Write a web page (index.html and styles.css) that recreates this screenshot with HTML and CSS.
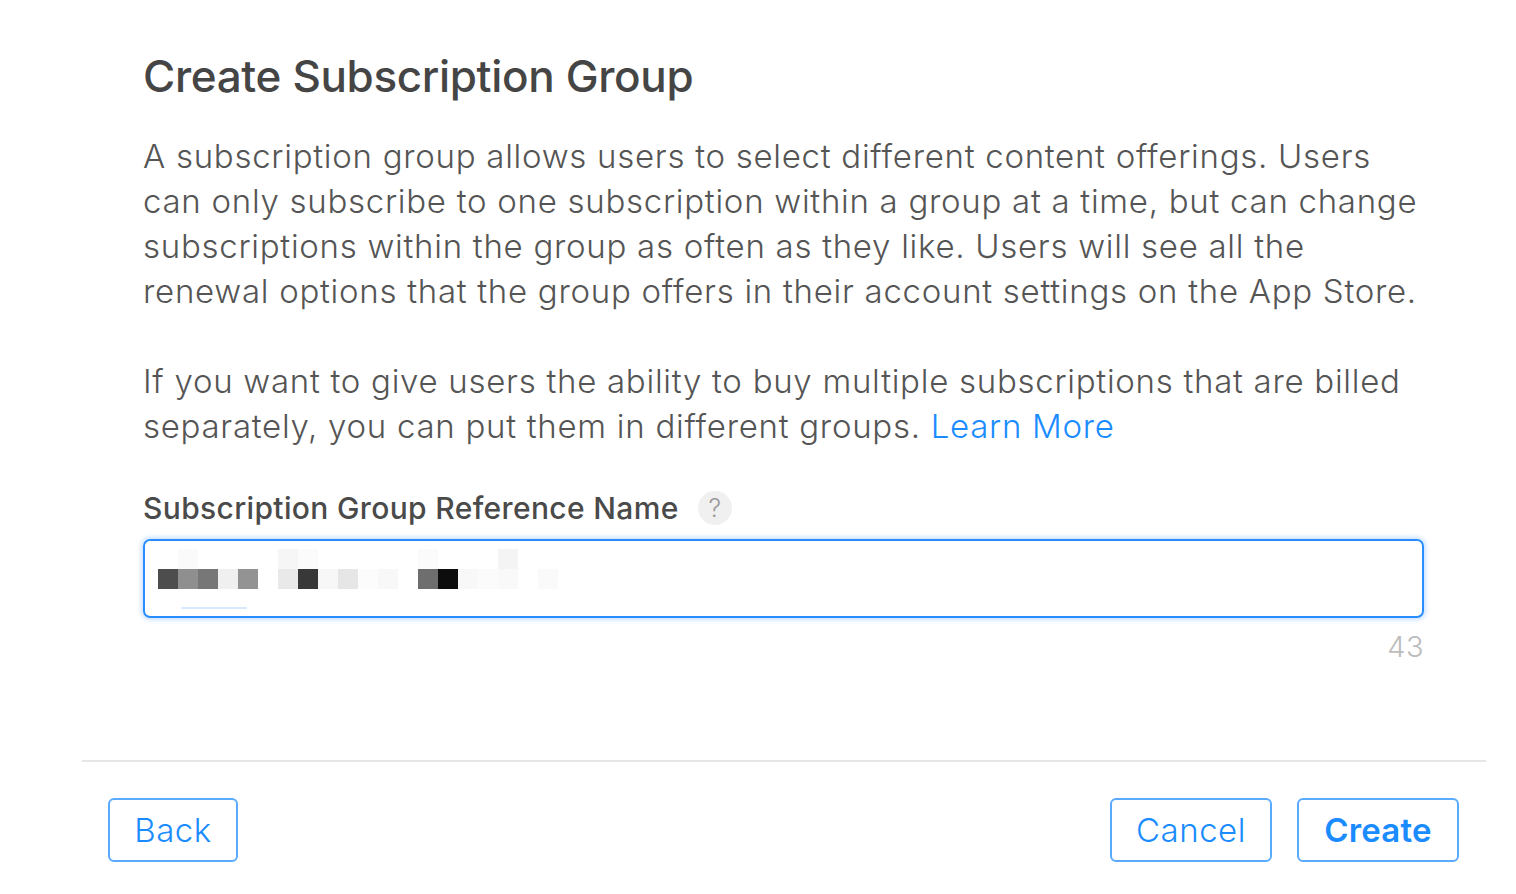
FILE: index.html
```html
<!DOCTYPE html>
<html>
<head>
<meta charset="utf-8">
<link rel="stylesheet" href="styles.css">
</head>
<body>
<div class="dialog">
  <div class="content">
    <h1 class="title">Create Subscription Group</h1>
    <p class="desc">A subscription group allows users to select different content offerings. Users can only subscribe to one subscription within a group at a time, but can change subscriptions within the group as often as they like. Users will see all the renewal options that the group offers in their account settings on the App Store.</p>
    <p class="desc">If you want to give users the ability to buy multiple subscriptions that are billed separately, you can put them in different groups. <a class="link" href="#">Learn More</a></p>
    <div class="label-row">
      <span class="label">Subscription Group Reference Name</span>
      <span class="help">?</span>
    </div>
    <div class="input">
      <div class="pixels">
        <div class="prow">
          <span class="px"></span><span class="px g-fa"></span><span class="px"></span><span class="px"></span><span class="px"></span><span class="px"></span><span class="px g-f6"></span><span class="px g-fb"></span><span class="px"></span><span class="px"></span><span class="px"></span><span class="px"></span><span class="px"></span><span class="px g-fb"></span><span class="px"></span><span class="px"></span><span class="px"></span><span class="px g-f4"></span><span class="px"></span><span class="px"></span>
        </div>
        <div class="prow">
          <span class="px g-4d"></span><span class="px g-8f"></span><span class="px g-77"></span><span class="px g-f0"></span><span class="px g-93"></span><span class="px"></span><span class="px g-e9"></span><span class="px g-38"></span><span class="px g-f7"></span><span class="px g-e6"></span><span class="px g-fc"></span><span class="px g-f8"></span><span class="px"></span><span class="px g-6e"></span><span class="px g-0d"></span><span class="px g-f8"></span><span class="px g-fb"></span><span class="px g-f9"></span><span class="px"></span><span class="px g-fa"></span>
        </div>
      </div>
      <span class="underline"></span>
    </div>
    <div class="counter">43</div>
  </div>
  <div class="divider"></div>
  <div class="footer">
    <button class="btn">Back</button>
    <div class="actions">
      <button class="btn btn-cancel">Cancel</button>
      <button class="btn btn-primary">Create</button>
    </div>
  </div>
</div>
</body>
</html>
```

FILE: styles.css
```css
* { box-sizing: border-box; }
html, body { margin: 0; padding: 0; background: #fff; }
body {
  font-family: Inter, "Noto Sans", "Liberation Sans", sans-serif;
  width: 1516px;
  height: 894px;
  overflow: hidden;
}
.dialog { display: flex; flex-direction: column; }
.content { padding: 48px 92px 0 143px; }
.title {
  margin: 0;
  font-size: 44px;
  font-weight: 500;
  color: #454545;
  line-height: 56px;
  letter-spacing: -0.35px;
}
.desc {
  margin: 0;
  font-size: 33px;
  font-weight: 300;
  line-height: 45px;
  letter-spacing: 0.72px;
  color: #555;
}
.title + .desc { margin-top: 30px; }
.desc + .desc { margin-top: 45px; }
.link { color: #1a8cff; text-decoration: none; }
.label-row {
  display: flex;
  align-items: center;
  gap: 19px;
  margin-top: 42px;
  height: 34px;
}
.label {
  font-size: 30px;
  font-weight: 500;
  letter-spacing: 0.35px;
  color: #4a4a4a;
}
.help {
  width: 34px;
  height: 34px;
  border-radius: 50%;
  background: #f0f0f0;
  color: #9a9a9a;
  font-size: 25px;
  font-weight: 300;
  display: flex;
  align-items: center;
  justify-content: center;
}
.input {
  position: relative;
  margin-top: 14px;
  height: 79px;
  border: 2px solid #2a8dff;
  border-radius: 7px;
  box-shadow: 0 0 4px 2px rgba(42, 141, 255, 0.25);
  padding: 8px 0 0 13px;
}
.pixels { display: flex; flex-direction: column; }
.prow { display: flex; }
.px { width: 20px; height: 20px; background: #fff; }
.g-4d { background: #4d4d4d; }
.g-8f { background: #8f8f8f; }
.g-77 { background: #777; }
.g-f0 { background: #f0f0f0; }
.g-93 { background: #939393; }
.g-e9 { background: #e9e9e9; }
.g-38 { background: #383838; }
.g-f7 { background: #f7f7f7; }
.g-e6 { background: #e6e6e6; }
.g-fc { background: #fcfcfc; }
.g-f8 { background: #f8f8f8; }
.g-6e { background: #6e6e6e; }
.g-0d { background: #0d0d0d; }
.g-fb { background: #fbfbfb; }
.g-f9 { background: #f9f9f9; }
.g-fa { background: #fafafa; }
.g-f6 { background: #f6f6f6; }
.g-f4 { background: #f4f4f4; }
.underline {
  position: absolute;
  left: 36px;
  top: 66px;
  width: 66px;
  height: 2px;
  border-radius: 2px;
  background: #d6e9ff;
}
.counter {
  text-align: right;
  margin-top: 10px;
  font-size: 29px;
  font-weight: 300;
  letter-spacing: 0.5px;
  color: #bcbcbc;
  line-height: 38px;
}
.divider {
  margin: 94px 30px 0 82px;
  height: 2px;
  background: #e6e6e6;
}
.footer {
  display: flex;
  justify-content: space-between;
  padding: 36px 57px 0 108px;
}
.actions { display: flex; gap: 25px; }
.btn {
  font-family: inherit;
  height: 64px;
  background: #fff;
  border: 2px solid #5aabff;
  border-radius: 6px;
  color: #1a8cff;
  font-size: 33px;
  font-weight: 300;
  letter-spacing: 0.5px;
  padding: 0;
  width: 130px;
  cursor: pointer;
}
.btn-cancel, .btn-primary { width: 162px; }
.btn-primary { font-weight: 600; letter-spacing: 0.2px; }
```
